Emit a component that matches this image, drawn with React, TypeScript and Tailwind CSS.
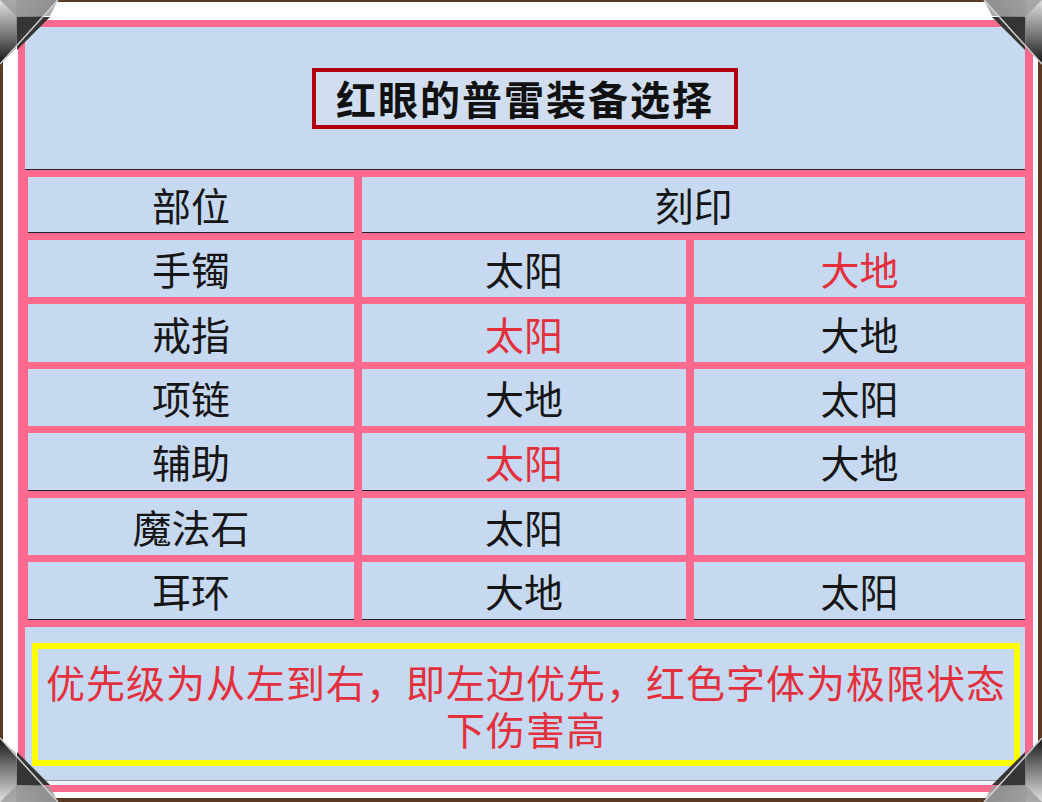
import React from 'react';

const FONT = { fontFamily: '"Noto Sans CJK SC", "Noto Sans", sans-serif' };

type Cell = { text: string; red?: boolean };
type Row = { part: string; a: Cell; b: Cell; line?: boolean; h: string };

const rows: Row[] = [
  { part: '手镯', a: { text: '太阳' }, b: { text: '大地', red: true }, h: 'h-[57px]' },
  { part: '戒指', a: { text: '太阳', red: true }, b: { text: '大地' }, h: 'h-[58px]' },
  { part: '项链', a: { text: '大地' }, b: { text: '太阳' }, h: 'h-[57px]' },
  { part: '辅助', a: { text: '太阳', red: true }, b: { text: '大地' }, line: true, h: 'h-[58px]' },
  { part: '魔法石', a: { text: '太阳' }, b: { text: '' }, h: 'h-[57px]' },
  { part: '耳环', a: { text: '大地' }, b: { text: '太阳' }, line: true, h: 'h-[58px]' },
];

const Corner = ({ className }: { className: string }) => (
  <svg className={`absolute h-[66px] w-[60px] ${className}`} viewBox="0 0 60 66">
    <defs>
      <linearGradient id="metal" x1="0" y1="0" x2="1" y2="1">
        <stop offset="0" stopColor="#cfcfcf" />
        <stop offset="0.4" stopColor="#7c7c7c" />
        <stop offset="1" stopColor="#1c1c1c" />
      </linearGradient>
      <linearGradient id="metal2" x1="0" y1="0" x2="0" y2="1">
        <stop offset="0" stopColor="#e2e2e2" />
        <stop offset="0.6" stopColor="#6a6a6a" />
        <stop offset="1" stopColor="#141414" />
      </linearGradient>
    </defs>
    <polygon points="0,0 58,0 0,64" fill="url(#metal)" />
    <polygon points="0,0 16,0 16,48 0,64" fill="url(#metal2)" />
    <polygon points="0,0 58,0 50,16 16,16" fill="#9a9a9a" opacity="0.8" />
    <polygon points="17,17 50,17 17,50" fill="#353535" />
    <line x1="58" y1="0" x2="0" y2="64" stroke="#d0d0d0" strokeWidth="1.5" />
  </svg>
);

const Text = ({ cell }: { cell: Cell }) => (
  <span className={`text-[39px] leading-none ${cell.red ? 'text-[#e3303c]' : 'text-[#161616]'}`}>
    {cell.text}
  </span>
);

export default function App() {
  return (
    <div className="relative h-[802px] w-[1042px] bg-[#5a3a22] pb-[4px] pl-[3px] pr-[4px] pt-[2px]" style={FONT}>
      <div className="h-full bg-white pb-[6px] pl-[15px] pr-[5px] pt-[18px]">
        <div className="flex h-full flex-col border-b-[7px] border-l-[7px] border-r-[8px] border-t-[7px] border-[#fd6a8e] bg-[#c6d9f0]">
          {/* title */}
          <div className="flex h-[143px] shrink-0 items-center justify-center border-b border-[#22222e]">
            <div className="flex h-[61px] items-center border-[4px] border-[#b3000c] bg-[#d0def0] px-[20px]">
              <span className="text-[40px] font-bold leading-none tracking-[2px] text-[#111]">红眼的普雷装备选择</span>
            </div>
          </div>

          {/* table */}
          <div className="grid shrink-0 grid-cols-[326px_324px_1fr] gap-x-[8px] gap-y-[7px] bg-[#fd6a8e] pb-[7px] pl-[3px] pt-[7px]">
            <div className="flex h-[56px] items-center justify-center border-b border-[#22222e] bg-[#c6d9f0]">
              <Text cell={{ text: '部位' }} />
            </div>
            <div className="col-span-2 flex h-[56px] items-center justify-center border-b border-[#22222e] bg-[#c6d9f0]">
              <Text cell={{ text: '刻印' }} />
            </div>
            {rows.map((r) => (
              <React.Fragment key={r.part}>
                <div className={`flex ${r.h} items-center justify-center bg-[#c6d9f0] ${r.line ? 'border-b border-[#22222e]' : ''}`}>
                  <Text cell={{ text: r.part }} />
                </div>
                <div className={`flex ${r.h} items-center justify-center bg-[#c6d9f0] ${r.line ? 'border-b border-[#22222e]' : ''}`}>
                  <Text cell={r.a} />
                </div>
                <div className={`flex ${r.h} items-center justify-center bg-[#c6d9f0] ${r.line ? 'border-b border-[#22222e]' : ''}`}>
                  <Text cell={r.b} />
                </div>
              </React.Fragment>
            ))}
          </div>

          {/* note */}
          <div className="flex flex-1 flex-col pl-[7px] pr-[5px] pt-[16px]">
            <div className="flex h-[123px] items-center justify-center border-[6px] border-[#ffff00] px-[2px]">
              <p className="text-center text-[39px] leading-[47px] tracking-[1px] text-[#e3303c]">
                优先级为从左到右，即左边优先，红色字体为极限状态下伤害高
              </p>
            </div>
            <div className="flex-1 border-b border-[#8e98a6]" />
            <div className="h-[4px] bg-[#eef3f9]" />
          </div>
        </div>
      </div>

      <Corner className="left-0 top-0" />
      <Corner className="right-0 top-0 -scale-x-100" />
      <Corner className="bottom-0 left-0 -scale-y-100" />
      <Corner className="bottom-0 right-0 -scale-x-100 -scale-y-100" />
    </div>
  );
}
